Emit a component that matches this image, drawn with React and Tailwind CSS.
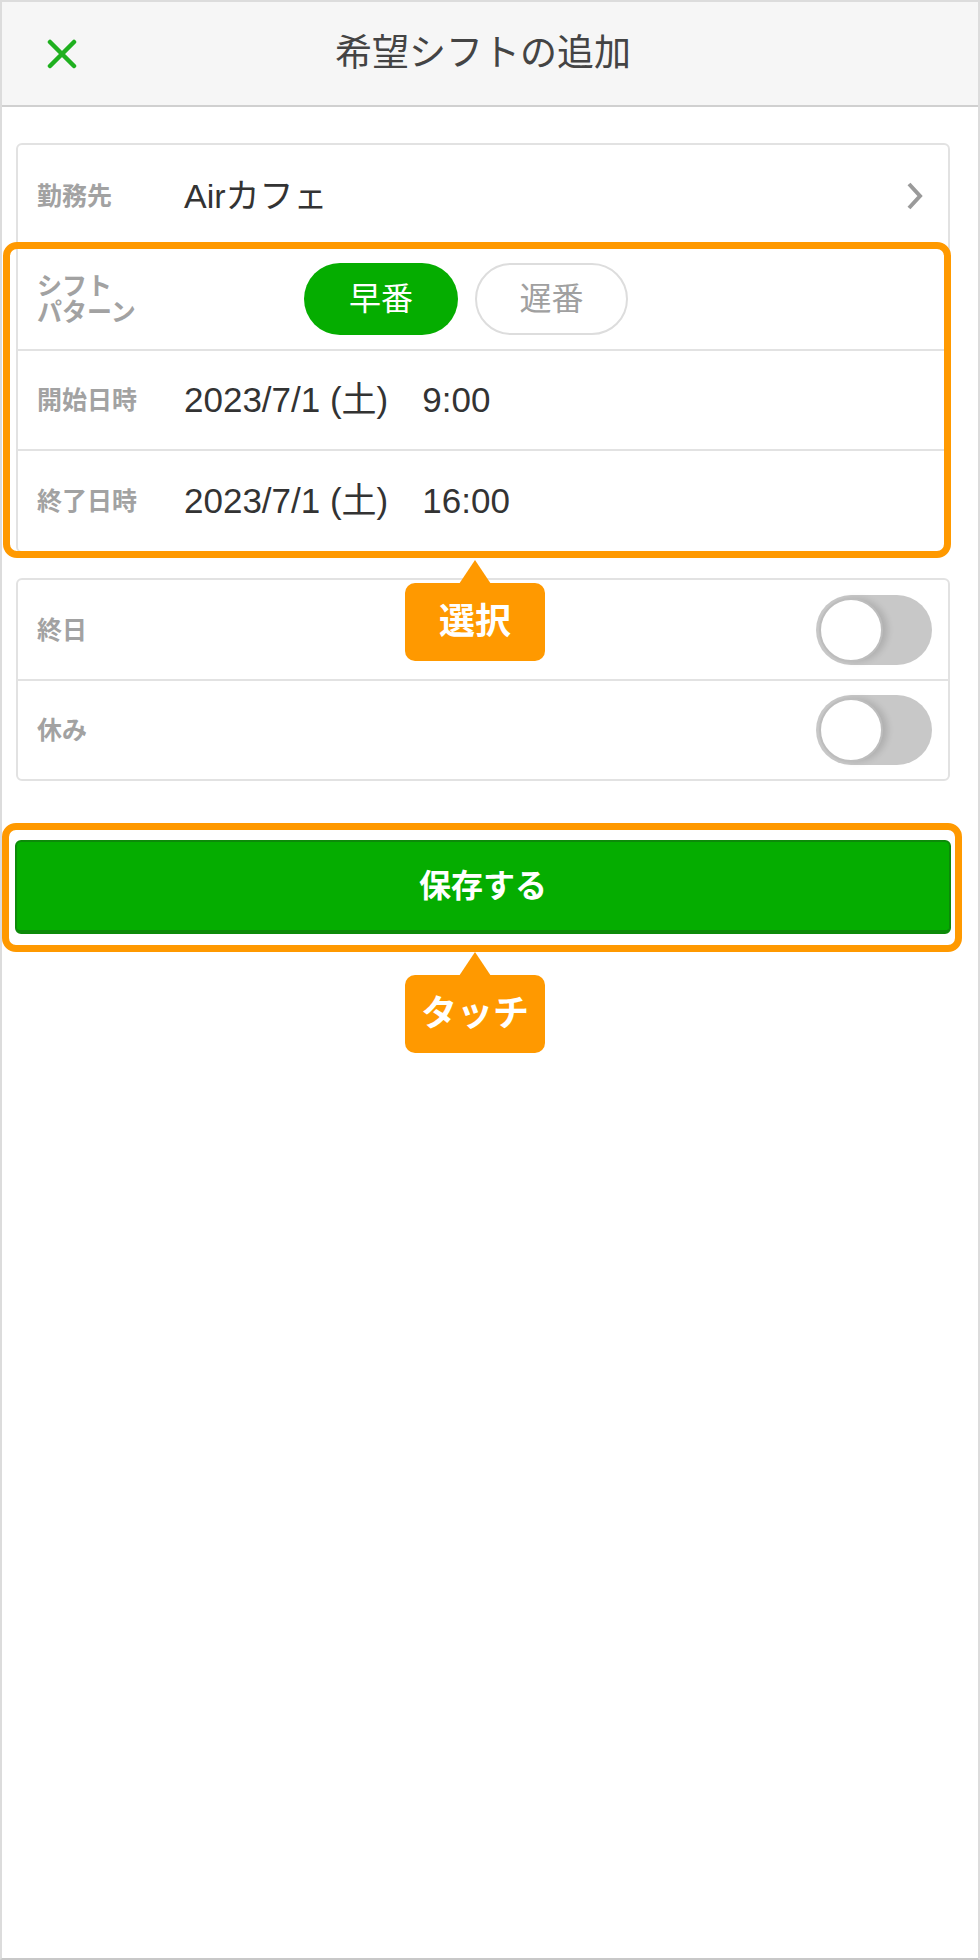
import React from 'react';

const FONT = "font-['Liberation_Sans','Noto_Sans_CJK_JP',sans-serif]";

const CloseIcon = () => (
  <svg width="30" height="30" viewBox="0 0 30 30">
    <path d="M3 3L27 27M27 3L3 27" stroke="#1fb01f" strokeWidth="4.5" strokeLinecap="round" />
  </svg>
);

const Chevron = () => (
  <svg width="18" height="28" viewBox="0 0 18 28">
    <polyline points="3,2 14,14 3,26" fill="none" stroke="#9a9a9a" strokeWidth="4" />
  </svg>
);

const Toggle = () => (
  <div className="w-[116px] h-[70px] rounded-full bg-[#c8c8c8] flex items-center pl-[3px]">
    <div className="w-[64px] h-[64px] rounded-full bg-white border-2 border-[#bdbdbd] shadow-[5px_0_6px_rgba(0,0,0,0.12)]" />
  </div>
);

const Label = ({ children }) => (
  <div className="w-[147px] shrink-0 text-[25px] leading-[26px] font-bold text-[#a2a2a2]">{children}</div>
);

// callout bubble for the annotations
const Callout = ({ top, text }) => (
  <div className="absolute left-[403px] flex flex-col items-center w-[140px]" style={{ top }}>
    <svg width="32" height="24" viewBox="0 0 32 24" className="-mb-px">
      <polygon points="16,0 32,24 0,24" fill="#ff9900" />
    </svg>
    <div className="w-[140px] h-[78px] rounded-[10px] bg-[#ff9900] flex items-center justify-center text-white text-[36px] font-bold">
      {text}
    </div>
  </div>
);

const App = () => {
  return (
    <div className={`${FONT} relative w-[980px] h-[1960px] bg-white border-2 border-[#dcdcdc] border-b-[#c8c8c8]`}>
      {/* Header */}
      <div className="h-[105px] bg-[#f6f6f6] border-b-2 border-[#d0d0d0]">
        <div className="w-[962px] h-full grid grid-cols-[1fr_auto_1fr] items-center">
          <div className="pl-[45px] flex items-center">
            <CloseIcon />
          </div>
          <h1 className="text-[37px] text-[#444] font-normal">希望シフトの追加</h1>
          <div />
        </div>
      </div>

      <div className="pl-[14px]">
        {/* Main card */}
        <div className="mt-[36px] w-[934px] border-2 border-[#e2e2e2] rounded-[6px] bg-white">
          <div className="h-[102px] flex items-center pl-[19px] pr-[24px]">
            <Label>勤務先</Label>
            <div className="flex-1 text-[34px] text-[#333]">Airカフェ</div>
            <Chevron />
          </div>
          <div className="h-[102px] flex items-center pl-[19px] border-t-2 border-[#e2e2e2]">
            <Label>
              シフト
              <br />
              パターン
            </Label>
            <div className="ml-[120px] flex gap-[17px]">
              <div className="w-[154px] h-[72px] rounded-full bg-[#05ad00] text-white text-[32px] flex items-center justify-center">
                早番
              </div>
              <div className="w-[153px] h-[72px] rounded-full bg-white border-2 border-[#dddddd] text-[#a0a0a0] text-[32px] flex items-center justify-center">
                遅番
              </div>
            </div>
          </div>
          <div className="h-[100px] flex items-center pl-[19px] border-t-2 border-[#e2e2e2]">
            <Label>開始日時</Label>
            <div className="text-[35px] text-[#333] flex">
              <span>2023/7/1 (土)</span>
              <span className="ml-[34px]">9:00</span>
            </div>
          </div>
          <div className="h-[102px] flex items-center pl-[19px] border-t-2 border-[#e2e2e2]">
            <Label>終了日時</Label>
            <div className="text-[35px] text-[#333] flex">
              <span>2023/7/1 (土)</span>
              <span className="ml-[34px]">16:00</span>
            </div>
          </div>
        </div>

        {/* Toggles card */}
        <div className="mt-[25px] w-[934px] border-2 border-[#e2e2e2] rounded-[6px] bg-white">
          <div className="h-[99px] flex items-center justify-between pl-[19px] pr-[16px]">
            <Label>終日</Label>
            <Toggle />
          </div>
          <div className="h-[100px] flex items-center justify-between pl-[19px] pr-[16px] border-t-2 border-[#e2e2e2]">
            <Label>休み</Label>
            <Toggle />
          </div>
        </div>

        {/* Save */}
        <button className="mt-[59px] -ml-px w-[936px] h-[94px] rounded-[6px] bg-[#05ad00] border-2 border-[#0c8a09] border-b-4 text-white text-[32px] font-bold flex items-center justify-center">
          保存する
        </button>
      </div>

      {/* Annotations */}
      <div className="absolute left-[1px] top-[240px] w-[948px] h-[316px] border-[7px] border-[#ff9900] rounded-[14px] pointer-events-none" />
      <Callout top={558} text="選択" />

      <div className="absolute left-0 top-[821px] w-[960px] h-[129px] border-[7px] border-[#ff9900] rounded-[14px] pointer-events-none" />
      <Callout top={950} text="タッチ" />
    </div>
  );
};

export default App;
